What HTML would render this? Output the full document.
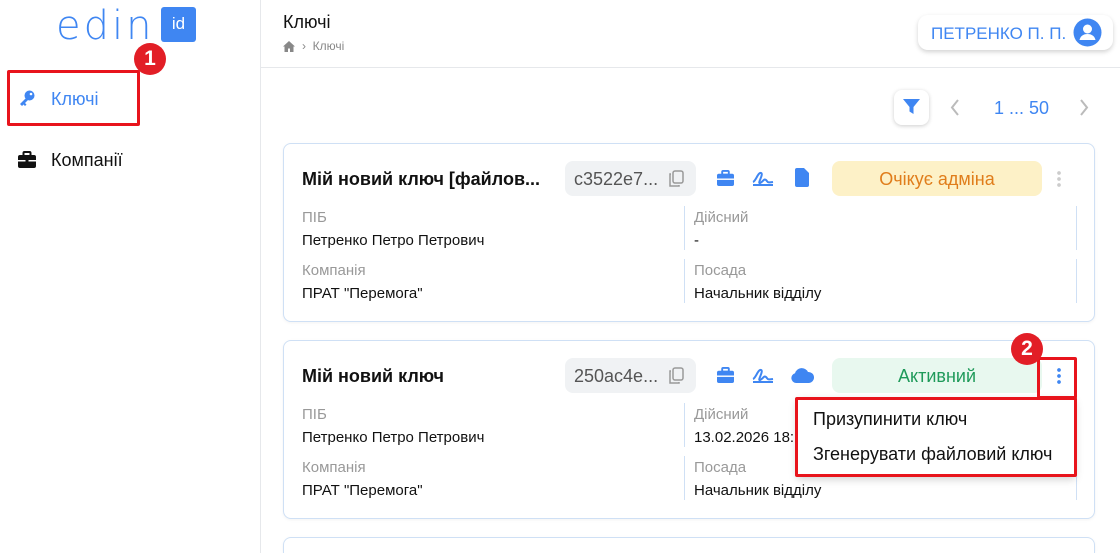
<!DOCTYPE html>
<html><head><meta charset="utf-8"><style>
*{box-sizing:border-box;margin:0;padding:0}
html,body{width:1120px;height:553px;overflow:hidden}
body{font-family:"Liberation Sans",sans-serif;background:#fff;position:relative;color:#111}
.abs{position:absolute}
.side{left:0;top:0;width:261px;height:553px;border-right:1px solid #e6e8eb;background:#fff}
.hdr{left:261px;top:0;right:0;height:68px;border-bottom:1px solid #e6e8eb}
.card{position:absolute;left:283px;width:812px;height:179px;border:1px solid #cfe0f5;border-radius:8px;background:#fff;box-shadow:0 1px 3px rgba(0,0,0,.05)}
.title{position:absolute;left:18px;top:25px;font-size:18px;font-weight:bold}
.chip{position:absolute;left:281px;top:17px;width:131px;height:35px;background:#f0f2f4;border-radius:8px;font-size:18px;color:#555;padding:8px 0 0 9px}
.badge{position:absolute;left:548px;top:17px;width:210px;height:35px;border-radius:8px;font-size:18px;text-align:center;padding-top:8px}
.lab{position:absolute;font-size:15px;color:#999}
.val{position:absolute;font-size:15px;color:#111}
.vl{position:absolute;width:1px;background:#cfe0f5}
.red{position:absolute;border:3px solid #e8141c;border-radius:2px}
.num{position:absolute;width:32px;height:32px;border-radius:50%;background:#e21e26;color:#fff;font-weight:bold;font-size:21px;text-align:center;line-height:32px}
</style></head><body>
<div class="abs side"></div>
<div class="abs" style="left:56px;top:3px;font-size:40px;color:#3f86f2;letter-spacing:3px;font-family:'DejaVu Sans',sans-serif;font-weight:200">edin</div>
<div class="abs" style="left:161px;top:7px;width:35px;height:35px;background:#3f86f2;border-radius:3px;color:#fff;font-size:17px;text-align:center;line-height:33px">id</div>
<div class="num" style="left:134px;top:43px">1</div>
<div class="red" style="left:7px;top:70px;width:133px;height:56px"></div>
<svg class="abs" style="left:18px;top:89px" width="18" height="18" viewBox="0 0 18 18"><circle cx="11.5" cy="6.5" r="5" fill="#3f86f2"/><path d="M8 9 L2 15 L4 17 L5.5 15.5 L7 17 L8.5 15.5 L7 14 L10 11z" fill="#3f86f2"/><circle cx="13" cy="5" r="1.3" fill="#fff"/></svg>
<div class="abs" style="left:51px;top:89px;font-size:18px;color:#3f86f2">Ключі</div>
<svg class="abs" style="left:17px;top:151px" width="20" height="18" viewBox="0 0 20 18"><rect x="6.5" y="1" width="7" height="4" rx="1" fill="none" stroke="#111" stroke-width="2"/><rect x="1" y="4" width="18" height="13" rx="2" fill="#111"/><rect x="1" y="9" width="18" height="1.5" fill="#fff"/><rect x="8.5" y="8" width="3" height="3.5" fill="#111"/></svg>
<div class="abs" style="left:51px;top:150px;font-size:18px">Компанії</div>

<div class="abs hdr"></div>
<div class="abs" style="left:283px;top:12px;font-size:18px">Ключі</div>
<svg class="abs" style="left:283px;top:41px" width="12" height="11" viewBox="0 0 12 11"><path d="M6 0L0 5.5h1.5V11h3.5V7.5h2V11h3.5V5.5H12z" fill="#888"/></svg>
<div class="abs" style="left:302px;top:39px;font-size:12px;color:#888">›&nbsp; Ключі</div>
<div class="abs" style="left:918px;top:15px;width:195px;height:35px;background:#fff;border-radius:10px;box-shadow:0 2px 5px rgba(0,0,0,.18);font-size:17px;color:#3f86f2;padding:9px 0 0 13px">ПЕТРЕНКО П. П.</div>
<svg class="abs" style="left:1073px;top:18px" width="29" height="29" viewBox="0 0 29 29"><circle cx="14.5" cy="14.5" r="14" fill="#3f86f2"/><circle cx="14.5" cy="11" r="4.5" fill="#fff"/><path d="M6.5 22c1-4.5 4.5-6 8-6s7 1.5 8 6z" fill="#fff"/></svg>

<div class="abs" style="left:894px;top:90px;width:35px;height:35px;border-radius:8px;box-shadow:0 1px 4px rgba(0,0,0,.2);background:#fff"></div>
<svg class="abs" style="left:903px;top:99px" width="17" height="16" viewBox="0 0 17 16"><path d="M0 0H17L10.5 8V15L6.5 12.5V8z" fill="#3f86f2"/></svg>
<svg class="abs" style="left:950px;top:99px" width="10" height="17" viewBox="0 0 10 17"><path d="M8 1L2 8.5 8 16" fill="none" stroke="#bbb" stroke-width="2"/></svg>
<div class="abs" style="left:994px;top:98px;font-size:18px;color:#3f86f2">1 ... 50</div>
<svg class="abs" style="left:1079px;top:99px" width="10" height="17" viewBox="0 0 10 17"><path d="M2 1L8 8.5 2 16" fill="none" stroke="#bbb" stroke-width="2"/></svg>

<div class="card" style="top:143px">
<div class="title">Мій новий ключ [файлов...</div>
<div class="chip">c3522e7...</div>
<div class="badge" style="background:#fdf1c7;color:#e07d1b">Очікує адміна</div>
<div class="lab" style="left:18px;top:65px">ПІБ</div><div class="val" style="left:18px;top:88px">Петренко Петро Петрович</div>
<div class="lab" style="left:18px;top:118px">Компанія</div><div class="val" style="left:18px;top:141px">ПРАТ "Перемога"</div>
<div class="lab" style="left:410px;top:65px">Дійсний</div><div class="val" style="left:410px;top:88px">-</div>
<div class="lab" style="left:410px;top:118px">Посада</div><div class="val" style="left:410px;top:141px">Начальник відділу</div>
<div class="vl" style="left:400px;top:62px;height:44px"></div><div class="vl" style="left:400px;top:115px;height:44px"></div>
<div class="vl" style="left:792px;top:62px;height:44px"></div><div class="vl" style="left:792px;top:115px;height:44px"></div>
<div class="abs" style="left:773px;top:26px;width:4px;height:17px;background:radial-gradient(circle,#ccc 1.7px,transparent 2px) 0 0/4px 6px"></div>
</div>
<div class="card" style="top:340px">
<div class="title">Мій новий ключ</div>
<div class="chip">250ac4e...</div>
<div class="badge" style="background:#e8f8ef;color:#1f9a5a">Активний</div>
<div class="lab" style="left:18px;top:65px">ПІБ</div><div class="val" style="left:18px;top:88px">Петренко Петро Петрович</div>
<div class="lab" style="left:18px;top:118px">Компанія</div><div class="val" style="left:18px;top:141px">ПРАТ "Перемога"</div>
<div class="lab" style="left:410px;top:65px">Дійсний</div><div class="val" style="left:410px;top:88px">13.02.2026 18:</div>
<div class="lab" style="left:410px;top:118px">Посада</div><div class="val" style="left:410px;top:141px">Начальник відділу</div>
<div class="vl" style="left:400px;top:62px;height:44px"></div><div class="vl" style="left:400px;top:115px;height:44px"></div>
<div class="vl" style="left:792px;top:115px;height:44px"></div>
<div class="abs" style="left:773px;top:26px;width:4px;height:17px;background:radial-gradient(circle,#3f86f2 1.7px,transparent 2px) 0 0/4px 6px"></div>
</div>
<div class="card" style="top:537px;height:16px;border-bottom:none;border-radius:8px 8px 0 0"></div>

<svg class="abs" style="left:668px;top:170px" width="16" height="18" viewBox="0 0 16 18"><rect x="5" y="1" width="10" height="12" rx="2" fill="none" stroke="#999" stroke-width="1.5"/><path d="M3 4H2v12h9v-1" fill="none" stroke="#999" stroke-width="1.5"/></svg>
<svg class="abs" style="left:668px;top:367px" width="16" height="18" viewBox="0 0 16 18"><rect x="5" y="1" width="10" height="12" rx="2" fill="none" stroke="#999" stroke-width="1.5"/><path d="M3 4H2v12h9v-1" fill="none" stroke="#999" stroke-width="1.5"/></svg>
<svg class="abs" style="left:716px;top:170px" width="19" height="17" viewBox="0 0 20 18"><rect x="6.5" y="1" width="7" height="4" rx="1" fill="none" stroke="#3f86f2" stroke-width="2"/><rect x="1" y="4" width="18" height="13" rx="2" fill="#3f86f2"/><rect x="1" y="9" width="18" height="1.5" fill="#fff"/></svg>
<svg class="abs" style="left:752px;top:169px" width="22" height="18" viewBox="0 0 22 18"><path d="M1 13c3-1 5-10 8-9s-4 11-1 10 4-5 6-3 1 3 7 2M1 16h20" fill="none" stroke="#3f86f2" stroke-width="2"/></svg>
<svg class="abs" style="left:795px;top:168px" width="14" height="19" viewBox="0 0 14 19"><path d="M0 2a2 2 0 0 1 2-2h7l5 5v12a2 2 0 0 1-2 2H2a2 2 0 0 1-2-2z" fill="#3f86f2"/></svg>
<svg class="abs" style="left:716px;top:367px" width="19" height="17" viewBox="0 0 20 18"><rect x="6.5" y="1" width="7" height="4" rx="1" fill="none" stroke="#3f86f2" stroke-width="2"/><rect x="1" y="4" width="18" height="13" rx="2" fill="#3f86f2"/><rect x="1" y="9" width="18" height="1.5" fill="#fff"/></svg>
<svg class="abs" style="left:752px;top:366px" width="22" height="18" viewBox="0 0 22 18"><path d="M1 13c3-1 5-10 8-9s-4 11-1 10 4-5 6-3 1 3 7 2M1 16h20" fill="none" stroke="#3f86f2" stroke-width="2"/></svg>
<svg class="abs" style="left:791px;top:367px" width="23" height="17" viewBox="0 0 23 17"><path d="M5 16a5 5 0 0 1-1-9.8A7 7 0 0 1 17 5a5.5 5.5 0 0 1 1 11z" fill="#3f86f2"/></svg>

<div class="abs" style="left:797px;top:398px;width:278px;height:78px;background:#fff;box-shadow:0 3px 8px rgba(0,0,0,.2)"></div>
<div class="red" style="left:795px;top:397px;width:282px;height:80px"></div>
<div class="abs" style="left:813px;top:409px;font-size:18px">Призупинити ключ</div>
<div class="abs" style="left:813px;top:444px;font-size:18px">Згенерувати файловий ключ</div>
<div class="red" style="left:1037px;top:357px;width:40px;height:42px"></div>
<div class="num" style="left:1011px;top:333px">2</div>
</body></html>
